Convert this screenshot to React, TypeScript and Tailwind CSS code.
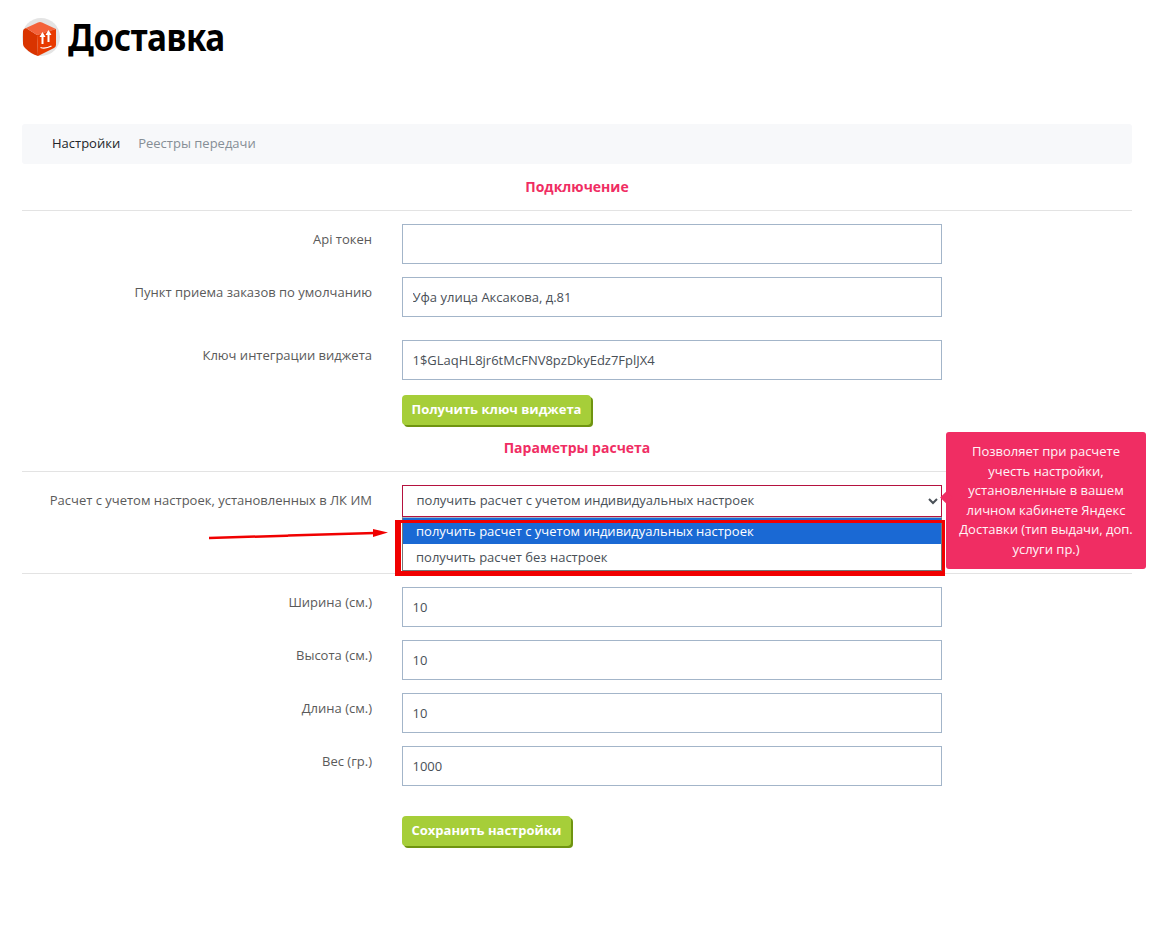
import { ReactNode } from "react";

function Field({ label, value, className = "mb-[13px]" }: { label: string; value?: string; className?: string }) {
  return (
    <div className={`flex ${className}`}>
      <label className="w-[350px] pt-[5px] text-right text-[13px] leading-[20px] text-[#5a5a5a]">{label}</label>
      <input
        readOnly
        value={value ?? ""}
        className="ml-[30px] h-[40px] w-[540px] border border-[#a3b5c9] bg-white px-[9.5px] text-[13px] text-[#495057] outline-none"
      />
    </div>
  );
}

function Heading({ children }: { children: ReactNode }) {
  return <h3 className="text-center text-[14px] font-bold leading-[20px] text-[#f02d63]">{children}</h3>;
}

function GreenButton({ children }: { children: ReactNode }) {
  return (
    <button
      type="button"
      className="ml-[380px] block h-[30px] rounded-[4px] bg-[#a6ce39] px-[9.5px] text-[13px] font-bold text-white shadow-[2px_2px_0_#6f9410]"
    >
      {children}
    </button>
  );
}

export default function App() {
  return (
    <div className="h-[933px] overflow-hidden bg-white px-[22px] font-['Open_Sans',sans-serif]">
      <div className="flex h-[124px] items-start pt-[13px]">
        <svg width="38" height="38" viewBox="0 0 38 38" className="mt-[5px] shrink-0">
          <circle cx="19" cy="19" r="19" fill="#e4e4e4" />
          <path d="M1 13 Q1 11 4 10 L15 17 L16 38 Q9 36 3 30 Q1 28 1 26Z" fill="#d93400" />
          <path d="M4 10 L16 4.500 Q18 3.500 20 4.500 L34 11 L15 17Z" fill="#f4623a" />
          <path d="M15 17 L34 11 L34 27 Q34 29 32 30 L16 38Z" fill="#e83a00" />
          <path d="M19.500 26v-7h-2l3-5 3 5h-2v7zM25.500 24v-7h-2l3-5 3 5h-2v7z" fill="#fff" />
          <path d="M18.500 29.500c3 1 7 .5 11-1.500" fill="none" stroke="#fff" strokeWidth="1.300" />
        </svg>
        <span className="ml-[8px] origin-left scale-x-[0.877] text-[38px] font-bold leading-[46px] tracking-[-0.5px] text-black font-['Noto_Sans',sans-serif]">
          Доставка
        </span>
      </div>

      <nav className="flex h-[40px] w-[1110px] items-center rounded-[3px] bg-[#f7f8fa] pl-[30px] text-[13px]">
        <span className="text-[#212529]">Настройки</span>
        <span className="ml-[18px] text-[#868e96]">Реестры передачи</span>
      </nav>

      <div className="w-[1110px]">
        <div className="mt-[13px]">
          <Heading>Подключение</Heading>
        </div>
        <div className="mb-[13px] mt-[13px] border-t border-[#e3e3e3]" />
        <Field label="Api токен" />
        <Field label="Пункт приема заказов по умолчанию" value="Уфа улица Аксакова, д.81" className="mb-[23px]" />
        <Field label="Ключ интеграции виджета" value="1$GLaqHL8jr6tMcFNV8pzDkyEdz7FplJX4" className="mb-[15px]" />
        <GreenButton>Получить ключ виджета</GreenButton>

        <div className="mt-[13px]">
          <Heading>Параметры расчета</Heading>
        </div>
        <div className="mb-[13px] mt-[13px] border-t border-[#e3e3e3]" />

        <div className="relative mb-[56px] flex">
          <label className="w-[350px] pt-[5px] text-right text-[13px] leading-[20px] text-[#5a5a5a]">
            Расчет с учетом настроек, установленных в ЛК ИМ
          </label>
          <select className="ml-[30px] h-[32px] w-[540px] border border-[#b5123f] bg-white pb-[2px] pl-[9.5px] text-[13px] text-[#495057] outline-none">
            <option>получить расчет с учетом индивидуальных настроек</option>
            <option>получить расчет без настроек</option>
          </select>

          {/* open dropdown list */}
          <div className="absolute left-[380px] top-[32px] w-[540px] border border-[#767676] border-t-[#a3b5c9] bg-white text-[13px] text-[#495057]">
            <div className="flex h-[26px] items-center bg-[#1a69d4] pl-[13px] pt-[2px] text-white">
              получить расчет с учетом индивидуальных настроек
            </div>
            <div className="flex h-[26px] items-center pl-[13px] pt-[2px]">получить расчет без настроек</div>
          </div>

          {/* annotation: red frame and arrow */}
          <div className="absolute left-[373px] top-[35px] h-[56px] w-[550px] border-b-[5px] border-l-[6px] border-r-[3px] border-t-[3px] border-[#f00000]" />
          <svg width="182" height="14" viewBox="0 0 182 14" className="absolute left-[187px] top-[41px]">
            <path d="M0 12 L166 7" stroke="#f00000" strokeWidth="2.500" />
            <path d="M164 3 L179 6.500 L164 11 Z" fill="#f00000" />
          </svg>

          {/* tooltip */}
          <div className="absolute left-[924px] top-[-53px] w-[200px] rounded-[3px] bg-[#f02d63] px-[10px] py-[10px] text-center text-[13px] leading-[19.5px] text-[#fff4f7]">
            <span className="absolute left-[-4px] top-[61px] h-[9px] w-[9px] rotate-45 bg-[#f02d63]" />
            Позволяет при расчете учесть настройки, установленные в вашем личном кабинете Яндекс Доставки (тип выдачи, доп. услуги пр.)
          </div>
        </div>

        <div className="mb-[13px] border-t border-[#e3e3e3]" />
        <Field label="Ширина (см.)" value="10" />
        <Field label="Высота (см.)" value="10" />
        <Field label="Длина (см.)" value="10" />
        <Field label="Вес (гр.)" value="1000" className="mb-[30px]" />
        <GreenButton>Сохранить настройки</GreenButton>
      </div>
    </div>
  );
}
